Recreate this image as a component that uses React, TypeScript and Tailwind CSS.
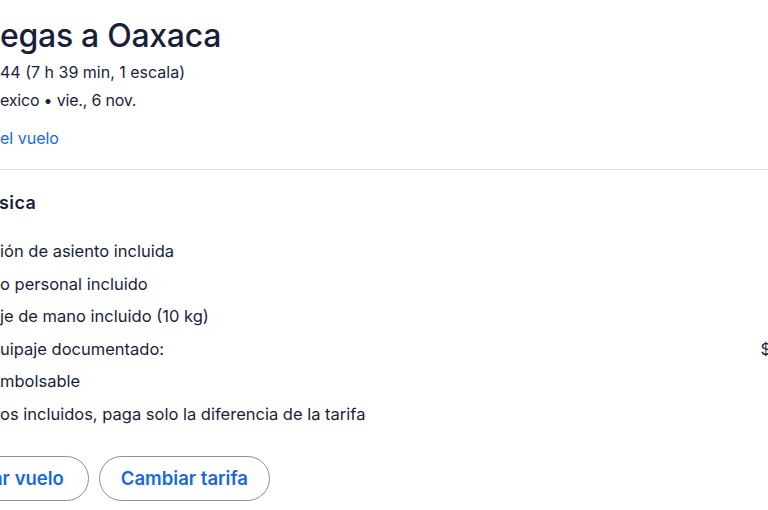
import React from "react";

export default function App() {
  const items = [
    "ión de asiento incluida",
    "o personal incluido",
    "je de mano incluido (10 kg)",
    "uipaje documentado:",
    "mbolsable",
    "os incluidos, paga solo la diferencia de la tarifa",
  ];
  return (
    <div className="w-[768px] h-[510px] overflow-hidden bg-white text-[#191e3b] font-['Inter',sans-serif]">
      <div className="pt-[14px]">
        <h1 className="text-[32px] font-medium leading-[44px] tracking-[-0.3px]">egas a Oaxaca</h1>
        <p className="mt-[2px] text-[16px] leading-[24px]">44 (7 h 39 min, 1 escala)</p>
        <p className="mt-[4px] text-[16px] leading-[24px] tracking-[-0.2px]">exico • vie., 6 nov.</p>
        <p className="mt-[14px] text-[16px] leading-[24px] text-[#1668e3]">el vuelo</p>
      </div>
      <div className="mt-[19px] h-px bg-[#dfe0e4]" />
      <div className="mt-[21px] ml-[-1px] text-[18px] font-semibold leading-[24px] tracking-[0.4px]">sica</div>
      <ul className="mt-[20px] flex flex-col text-[16.5px] leading-[32.5px]">
        {items.map((t, i) => (
          <li key={i} className="flex justify-between">
            <span>{t}</span>
            {i === 3 && <span className="mr-[-3px] text-[#191e3b]">$</span>}
          </li>
        ))}
      </ul>
      <div className="mt-[26px] flex gap-[10px] ml-[-33px]">
        <button className="h-[45px] px-[24px] rounded-full border border-[#8b8e9c] text-[#1668e3] text-[18.5px] font-semibold">
          ar vuelo
        </button>
        <button className="h-[45px] px-[21px] rounded-full border border-[#8b8e9c] text-[#1668e3] text-[18.5px] font-semibold">
          Cambiar tarifa
        </button>
      </div>
    </div>
  );
}
